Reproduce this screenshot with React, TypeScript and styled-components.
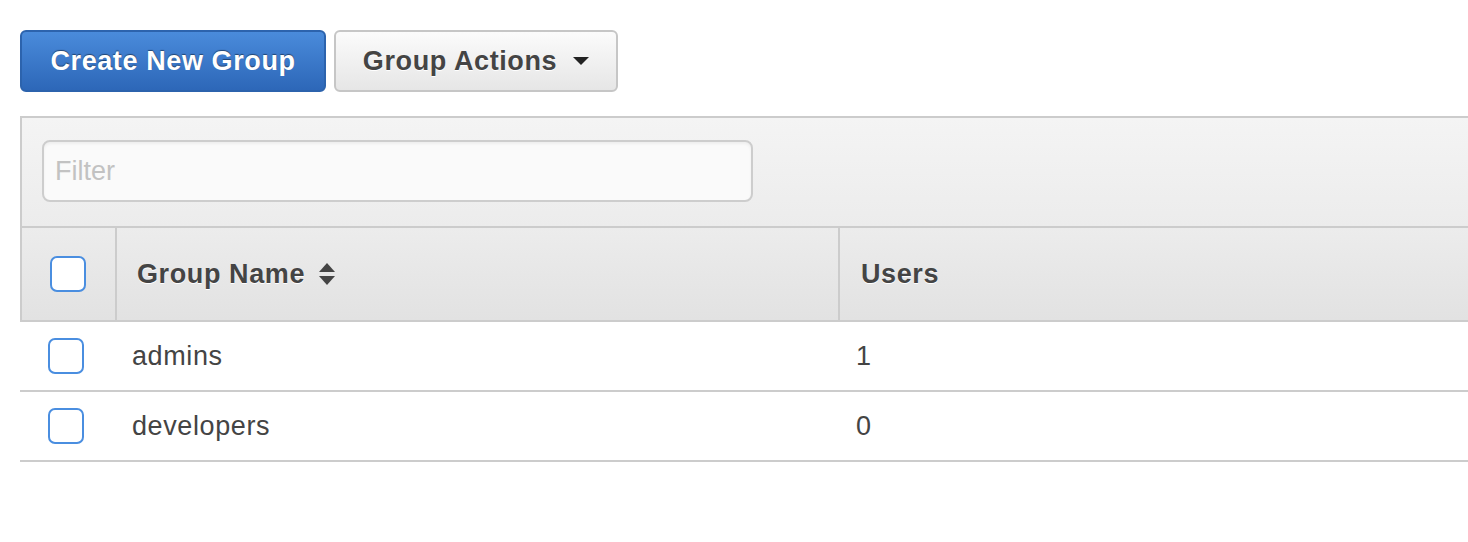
import styled, { createGlobalStyle } from 'styled-components';

type Group = {
  name: string;
  users: number;
};

const groups: Group[] = [
  { name: 'admins', users: 1 },
  { name: 'developers', users: 0 },
];

const GlobalStyle = createGlobalStyle`
  html, body {
    margin: 0;
    padding: 0;
    background: #fff;
    overflow: hidden;
  }
  body {
    font-family: "Liberation Sans", Arial, Helvetica, sans-serif;
    color: #444;
  }
`;

const Page = styled.div`
  padding: 30px 0 0 20px;
  width: 1480px;
  box-sizing: border-box;
`;

const Toolbar = styled.div`
  display: flex;
  gap: 8px;
  margin-bottom: 24px;
`;

const Button = styled.button<{ $primary?: boolean }>`
  height: 62px;
  box-sizing: border-box;
  display: flex;
  align-items: center;
  justify-content: center;
  gap: 16px;
  padding: 0;
  border-radius: 6px;
  font-family: "Liberation Sans", Arial, sans-serif;
  font-size: 27px;
  font-weight: bold;
  letter-spacing: 0.6px;
  cursor: pointer;
  width: ${(p) => (p.$primary ? '306px' : '284px')};
  color: ${(p) => (p.$primary ? '#fff' : '#444')};
  border: 2px solid ${(p) => (p.$primary ? '#2c63ad' : '#c6c6c6')};
  background: ${(p) =>
    p.$primary
      ? 'linear-gradient(to bottom, #4a8bdb, #2d67b8)'
      : 'linear-gradient(to bottom, #fbfbfb, #e6e6e6)'};
  text-shadow: ${(p) =>
    p.$primary ? '0 -1px 1px rgba(0, 0, 0, 0.45)' : '0 1px 0 #fff'};
`;

const Caret = styled.span`
  width: 0;
  height: 0;
  border-left: 8px solid transparent;
  border-right: 8px solid transparent;
  border-top: 8px solid #222;
`;

const Panel = styled.div`
  border-top: 2px solid #ccc;
`;

const FilterBar = styled.div`
  border-left: 2px solid #ccc;
  padding: 22px 20px 24px;
  background: linear-gradient(to bottom, #f4f4f4, #ececec);
`;

const FilterInput = styled.input`
  width: 711px;
  height: 62px;
  box-sizing: border-box;
  border: 2px solid #cdcdcd;
  border-radius: 8px;
  background: #fafafa;
  box-shadow: inset 0 2px 3px rgba(0, 0, 0, 0.05);
  padding: 0 11px;
  font-family: "Liberation Sans", Arial, sans-serif;
  font-size: 27px;
  color: #444;
  outline: none;
  &::placeholder {
    color: #c2c2c2;
  }
`;

const HeaderRow = styled.div`
  display: grid;
  grid-template-columns: 95px 723px 1fr;
  height: 96px;
  box-sizing: border-box;
  border-top: 2px solid #ccc;
  border-bottom: 2px solid #ccc;
  background: linear-gradient(to bottom, #ececec, #e2e2e2);
`;

const HeaderCell = styled.div<{ $pad: number }>`
  display: flex;
  align-items: center;
  gap: 14px;
  box-sizing: border-box;
  border-left: 2px solid #ccc;
  padding-left: ${(p) => p.$pad}px;
  font-size: 27px;
  font-weight: bold;
  letter-spacing: 0.6px;
  color: #444;
  text-shadow: 0 1px 0 #fff;
`;

const Row = styled.div`
  display: grid;
  grid-template-columns: 95px 723px 1fr;
  height: 70px;
  box-sizing: border-box;
  border-bottom: 2px solid #ccc;
`;

const Cell = styled.div<{ $pad: number }>`
  display: flex;
  align-items: center;
  padding-left: ${(p) => p.$pad}px;
  font-size: 27px;
  letter-spacing: 0.6px;
  color: #444;
`;

const Checkbox = styled.span`
  width: 36px;
  height: 36px;
  box-sizing: border-box;
  border: 2px solid #4a8ee0;
  border-radius: 7px;
  background: #fff;
`;

const SortIcon = () => (
  <svg width="16" height="22" viewBox="0 0 16 22">
    <path d="M8 0 L16 9 H0 Z" fill="#444" />
    <path d="M0 13 H16 L8 22 Z" fill="#444" />
  </svg>
);

export default function App() {
  return (
    <Page>
      <GlobalStyle />
      <Toolbar>
        <Button $primary>Create New Group</Button>
        <Button>
          Group Actions
          <Caret />
        </Button>
      </Toolbar>
      <Panel>
        <FilterBar>
          <FilterInput placeholder="Filter" />
        </FilterBar>
        <HeaderRow>
          <HeaderCell $pad={28}>
            <Checkbox />
          </HeaderCell>
          <HeaderCell $pad={20}>
            Group Name
            <SortIcon />
          </HeaderCell>
          <HeaderCell $pad={21}>Users</HeaderCell>
        </HeaderRow>
      </Panel>
      {groups.map((group) => (
        <Row key={group.name}>
          <Cell $pad={28}>
            <Checkbox />
          </Cell>
          <Cell $pad={17}>{group.name}</Cell>
          <Cell $pad={18}>{group.users}</Cell>
        </Row>
      ))}
    </Page>
  );
}
